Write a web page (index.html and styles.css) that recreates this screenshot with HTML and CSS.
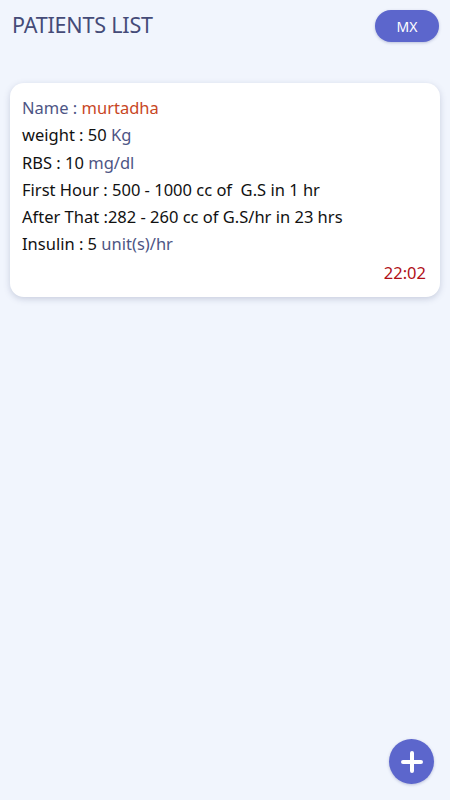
FILE: index.html
```html
<!DOCTYPE html>
<html lang="en">
<head>
<meta charset="UTF-8" />
<meta name="viewport" content="width=device-width, initial-scale=1" />
<title>Patients List</title>
<link rel="stylesheet" href="styles.css">
</head>
<body>
  <header class="topbar">
    <h1>PATIENTS LIST</h1>
    <button class="lang-btn" type="button">MX</button>
  </header>

  <main class="list">
    <article class="card">
      <p class="row"><span class="key">Name : </span><span class="name">murtadha</span></p>
      <p class="row">weight : 50 <span class="unit">Kg</span></p>
      <p class="row">RBS : 10 <span class="unit">mg/dl</span></p>
      <p class="row">First Hour : 500 - 1000 cc of &nbsp;G.S in 1 hr</p>
      <p class="row">After That :282 - 260 cc of G.S/hr in 23 hrs</p>
      <p class="row">Insulin : 5 <span class="unit">unit(s)/hr</span></p>
      <div class="time">22:02</div>
    </article>
  </main>

  <button class="fab" type="button" aria-label="Add patient">
    <svg width="24" height="24" viewBox="0 0 24 24">
      <path d="M12 3v18M3 12h18" stroke="#fff" stroke-width="4" stroke-linecap="round" />
    </svg>
  </button>
</body>
</html>
```

FILE: styles.css
```css
/* Base */
* {
  box-sizing: border-box;
}
body {
  margin: 0;
  font-family: 'Noto Sans', sans-serif;
  background: #f1f5fd;
  height: 100vh;
  overflow: hidden;
}
/* Header */
.topbar {
  display: flex;
  justify-content: space-between;
  align-items: center;
  padding: 10px 11px 0 12px;
}
.topbar h1 {
  margin: 0;
  font-size: 21.5px;
  font-weight: 400;
  color: #454b78;
  letter-spacing: -0.2px;
  position: relative;
  top: -2px;
}
.lang-btn {
  background: #5c66cc;
  color: #fff;
  border: none;
  border-radius: 16px;
  width: 64px;
  height: 32px;
  font-family: inherit;
  font-size: 14px;
  box-shadow: 0 1px 3px rgba(60, 70, 140, 0.3);
}
/* Card list */
.list {
  padding: 41px 10px 0;
}
.card {
  background: #fff;
  border-radius: 14px;
  padding: 11px 14px 11px 12px;
  box-shadow: 0 2px 6px rgba(80, 90, 130, 0.25);
}
.row {
  margin: 0;
  font-size: 16.5px;
  line-height: 27.3px;
  color: #111;
}
.key {
  color: #4d5585;
}
.name {
  color: #c8471f;
}
.unit {
  color: #4d5585;
}
.time {
  text-align: right;
  color: #b01018;
  font-size: 16.5px;
  line-height: 27px;
  margin-top: 1px;
}
/* Floating add button */
.fab {
  position: fixed;
  right: 16px;
  bottom: 16px;
  width: 45px;
  height: 45px;
  border-radius: 50%;
  border: none;
  background: #5c66cc;
  display: flex;
  align-items: center;
  justify-content: center;
  padding: 0;
  box-shadow: 0 1px 3px rgba(60, 70, 140, 0.3);
}
```
